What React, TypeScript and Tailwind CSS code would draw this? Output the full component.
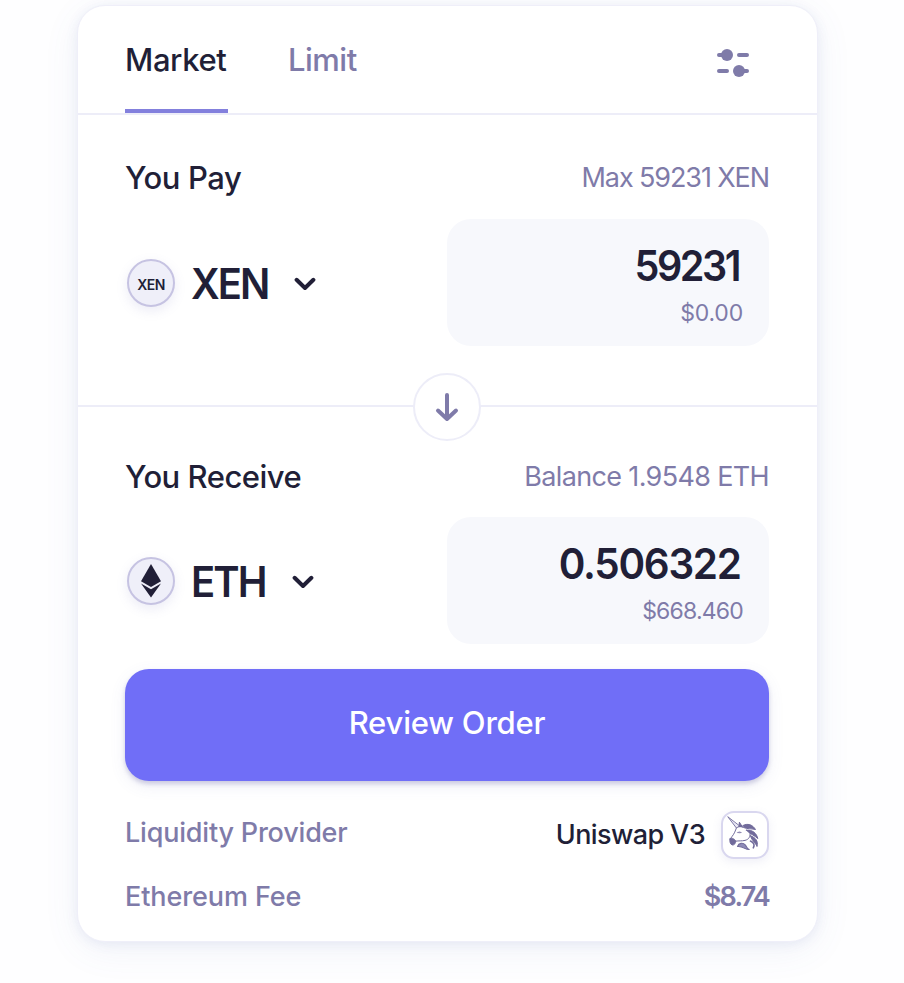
import type { ReactNode } from "react";

function SlidersIcon() {
  return (
    <svg width="34" height="30" viewBox="0 0 34 30" fill="#7f7ba9" stroke="#7f7ba9" strokeWidth="4" strokeLinecap="round">
      <path d="M3 7H10M23 7H31M3 23H11M24 23H31" />
      <circle cx="11" cy="7" r="6" stroke="none" />
      <circle cx="23" cy="23" r="6" stroke="none" />
    </svg>
  );
}

function Chevron() {
  return (
    <svg width="22" height="14" viewBox="0 0 22 14" fill="none" stroke="#211f37" strokeWidth="4" strokeLinecap="round" strokeLinejoin="round" className="relative top-px">
      <path d="M2.6 2.8L11 11L19.4 2.8" />
    </svg>
  );
}

function EthIcon() {
  return (
    <svg width="22" height="34" viewBox="0 0 22 34" fill="#211f37">
      <path d="M11 0L21 17.2L11 23L1 17.2Z" />
      <path d="M1 19.6L11 25.3L21 19.6L11 33.5Z" />
    </svg>
  );
}

function UnicornIcon() {
  return (
    <svg width="48" height="48" viewBox="0 0 48 48" fill="none" stroke="#716b9b" strokeLinecap="round" strokeLinejoin="round" className="shrink-0">
      <path d="M7 6L15.4 17L18.4 15.2Z" fill="#e9e8f5" strokeWidth="0.9" />
      <path d="M18 16L18.4 11.2L21.8 16.5" fill="#716b9b" strokeWidth="1" />
      <path d="M15.4 17C14.2 20 13.5 22.5 11 25.5L9.2 28" strokeWidth="1" />
      <path d="M9 27.8C10.5 26.5 12.8 27.4 14.6 29.6C15 32 13.4 34.4 11.2 34C9.2 33.4 8.3 30 9 27.8Z" fill="#716b9b" strokeWidth="0.9" />
      <path d="M14.6 30.2C18 29.6 20.5 30.2 24 29.4C28 28.4 29.6 25.5 29 21.5" strokeWidth="1" />
      <path d="M16.5 21.5Q18.4 20 20.5 21.5Q18.4 22.5 16.5 21.5Z" fill="#a5a1c8" strokeWidth="0.4" />
      <path d="M22 14.5C26.5 12 31.5 13.5 34.5 18.5C29.5 17.4 26.5 18.2 22.8 16.6Z" fill="#716b9b" strokeWidth="1" />
      <path d="M25.5 19.2C31.5 18.5 35.8 22.5 36.8 27.6C33.8 24.4 29.5 23.5 25.5 19.2Z" fill="#716b9b" strokeWidth="1" />
      <path d="M29.5 24.8C34.6 26.6 37.4 30 36 35.5C34.6 31.6 31 30.3 29.5 24.8Z" fill="#716b9b" strokeWidth="1" />
      <path d="M29.5 30C33 31.6 33.9 34 32.3 36.8" strokeWidth="1.6" />
      <path d="M16.5 35.5C17.8 31.8 22 31.5 24.2 33.8C25.7 35.4 25.8 37.7 28.2 38.5C23.6 39 22.5 34.8 16.5 35.5Z" fill="#8f8bb8" strokeWidth="1.1" />
    </svg>
  );
}

function TokenBadge({ children }: { children: ReactNode }) {
  return (
    <span className="ml-[2px] flex size-12 shrink-0 items-center justify-center rounded-full border-2 border-[#c6c3e2] bg-[#efeff9] shadow-[0_4px_12px_rgba(120,120,190,0.14)]">
      {children}
    </span>
  );
}

function AmountBox({ children }: { children: ReactNode }) {
  return <div className="flex h-[127px] w-[322px] flex-col items-end rounded-[24px] bg-[#f7f8fc] pr-[26px] pt-[23px]">{children}</div>;
}

export default function App() {
  return (
    <div className="h-[983px] overflow-hidden bg-[#fefeff] font-['Inter',sans-serif] font-medium text-[#211f37]">
      <main className="ml-[77px] mt-[5px] h-[937px] w-[741px] rounded-[28px] border border-[#efeff9] bg-white shadow-[0_2px_12px_rgba(90,110,180,0.10),0_8px_36px_rgba(90,110,180,0.08)]">
        <header className="flex h-[109px] justify-between border-b-2 border-[#ededf8] pl-[47px] pr-[67px]">
          <nav className="flex gap-[60px]">
            <div className="flex h-[107px] w-[103px] flex-col justify-between border-b-4 border-[#8380dd] pt-[33px]">
              <span className="whitespace-nowrap text-[31px] leading-[42px] tracking-[-0.4px]">Market</span>
            </div>
            <span className="pt-[33px] text-[31px] leading-[42px] tracking-[-0.5px] text-[#7f7ba9]">Limit</span>
          </nav>
          <div className="pt-[42px]"><SlidersIcon /></div>
        </header>

        <section className="relative h-[292px] border-b-2 border-[#ededf8] pl-[47px] pr-[48px] pt-[43px]">
          <div className="flex h-[40px] items-center justify-between">
            <h2 className="text-[31px] tracking-[-0.4px]">You Pay</h2>
            <span className="text-[27px] font-normal tracking-[-1.1px] text-[#7f7ba9]">Max 59231 XEN</span>
          </div>
          <div className="mt-[21px] flex items-center justify-between">
            <div className="flex items-center">
              <TokenBadge><span className="pt-[3px] text-[14px] font-semibold tracking-[-0.6px]">XEN</span></TokenBadge>
              <span className="ml-[16px] mr-[25px] w-[78px] origin-left scale-x-95 whitespace-nowrap pt-[3px] text-[42px] leading-[50px] font-semibold tracking-[-2px]">XEN</span>
              <Chevron />
            </div>
            <AmountBox>
              <span className="origin-right scale-x-[0.92] pr-[4px] text-[43px] leading-[46px] font-semibold tracking-[-2.6px]">59231</span>
              <span className="mt-[10px] text-[23px] leading-[30px] font-normal tracking-[-0.2px] text-[#7f7ba9]">$0.00</span>
            </AmountBox>
          </div>
          <div className="absolute left-[335px] top-[258px] flex size-[68px] items-center justify-center rounded-full border-2 border-[#ededf8] bg-white">
            <svg width="24" height="30" viewBox="0 0 24 30" fill="none" stroke="#7f7ba9" strokeWidth="4" strokeLinecap="round" strokeLinejoin="round">
              <path d="M12 3V27M3 18.5L12 27L21 18.5" />
            </svg>
          </div>
        </section>

        <section className="pl-[47px] pr-[48px] pt-[50px]">
          <div className="flex h-[40px] items-center justify-between">
            <h2 className="text-[31px] tracking-[-0.5px]">You Receive</h2>
            <span className="text-[27px] font-normal tracking-[-0.65px] text-[#7f7ba9]">Balance 1.9548 ETH</span>
          </div>
          <div className="mt-[20px] flex items-center justify-between">
            <div className="flex items-center">
              <TokenBadge><EthIcon /></TokenBadge>
              <span className="ml-[16px] mr-[25px] w-[76px] origin-left scale-x-95 whitespace-nowrap pt-[3px] text-[42px] leading-[50px] font-semibold tracking-[-2px]">ETH</span>
              <Chevron />
            </div>
            <AmountBox>
              <span className="origin-right scale-x-[0.94] pr-[2px] text-[43px] leading-[46px] font-semibold tracking-[-1.35px]">0.506322</span>
              <span className="mt-[10px] text-[23px] leading-[30px] font-normal tracking-[-0.8px] text-[#7f7ba9]">$668.460</span>
            </AmountBox>
          </div>
          <button className="mt-[25px] flex h-[112px] w-full items-center justify-center rounded-[24px] bg-[#706ef7] pb-[3px] text-[31px] tracking-[-0.2px] text-white shadow-[0_3px_4px_rgba(80,75,150,0.24),0_5px_16px_rgba(90,100,180,0.10)]">Review Order</button>
          <div className="mt-[30px] flex h-[48px] items-center justify-between text-[27px]">
            <span className="pb-[3px] tracking-[-0.2px] text-[#7f7ba9]">Liquidity Provider</span>
            <div className="flex items-center gap-[16px]">
              <span className="tracking-[-0.6px]">Uniswap V3</span>
              <span className="flex size-12 items-center justify-center rounded-[13px] border-2 border-[#d9d7ef] bg-white shadow-[0_3px_10px_rgba(120,120,190,0.12)]"><UnicornIcon /></span>
            </div>
          </div>
          <div className="mt-[18px] flex h-[40px] items-center justify-between text-[27px] text-[#7f7ba9]">
            <span className="tracking-[-0.1px]">Ethereum Fee</span>
            <span className="font-semibold tracking-[-1.8px]">$8.74</span>
          </div>
        </section>
      </main>
    </div>
  );
}
